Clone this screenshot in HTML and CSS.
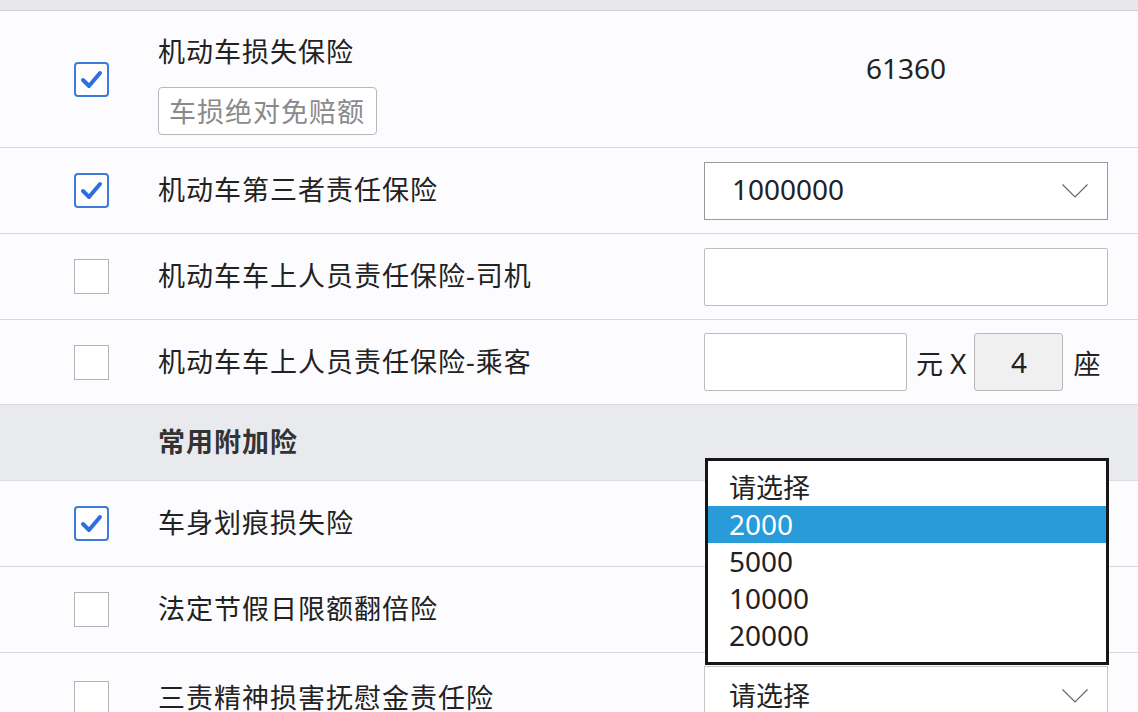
FILE: index.html
```html
<!DOCTYPE html>
<html>
<head>
    <title>投保方案</title>
    <link rel="stylesheet" href="styles.css">
</head>
<body>
    <div class="sheet">
        <div class="topbar"></div>

        <div class="row row-tall">
            <div class="check-cell"><span class="check checked"></span></div>
            <div class="label-cell stack">
                <span class="label">机动车损失保险</span>
                <input class="field small" type="text" placeholder="车损绝对免赔额">
            </div>
            <div class="value-cell center num">61360</div>
        </div>

        <div class="row">
            <div class="check-cell"><span class="check checked"></span></div>
            <div class="label-cell"><span class="label">机动车第三者责任保险</span></div>
            <div class="value-cell">
                <div class="select">
                    <span class="num">1000000</span>
                    <svg class="chevron" width="26" height="14" viewBox="0 0 26 14"><polyline points="0.5,0.5 13,13 25.5,0.5" fill="none" stroke="#666" stroke-width="1.2"/></svg>
                </div>
            </div>
        </div>

        <div class="row">
            <div class="check-cell"><span class="check"></span></div>
            <div class="label-cell"><span class="label">机动车车上人员责任保险-司机</span></div>
            <div class="value-cell"><input class="field full" type="text"></div>
        </div>

        <div class="row row-short">
            <div class="check-cell"><span class="check"></span></div>
            <div class="label-cell"><span class="label">机动车车上人员责任保险-乘客</span></div>
            <div class="value-cell seats">
                <input class="field amount" type="text">
                <span class="unit">元 <span class="num">X</span></span>
                <span class="seat-box num">4</span>
                <span class="unit">座</span>
            </div>
        </div>

        <div class="row section">
            <div class="check-cell"></div>
            <div class="label-cell"><span class="label bold">常用附加险</span></div>
            <div class="value-cell"></div>
        </div>

        <div class="row">
            <div class="check-cell"><span class="check checked"></span></div>
            <div class="label-cell"><span class="label">车身划痕损失险</span></div>
            <div class="value-cell"></div>
        </div>

        <div class="row">
            <div class="check-cell"><span class="check"></span></div>
            <div class="label-cell"><span class="label">法定节假日限额翻倍险</span></div>
            <div class="value-cell"></div>
        </div>

        <div class="row row-last">
            <div class="check-cell"><span class="check"></span></div>
            <div class="label-cell"><span class="label">三责精神损害抚慰金责任险</span></div>
            <div class="value-cell">
                <div class="select low">
                    <span>请选择</span>
                    <svg class="chevron" width="26" height="14" viewBox="0 0 26 14"><polyline points="0.5,0.5 13,13 25.5,0.5" fill="none" stroke="#666" stroke-width="1.2"/></svg>
                </div>
            </div>
        </div>

        <!-- open option list of the scratch cover select -->
        <ul class="options">
            <li>请选择</li>
            <li class="active num">2000</li>
            <li class="num">5000</li>
            <li class="num">10000</li>
            <li class="num">20000</li>
        </ul>
    </div>
</body>
</html>
```

FILE: styles.css
```css
body {
    margin: 0;
    background: #fcfcfe;
    font-family: "Noto Sans", "Noto Sans CJK SC", sans-serif;
    color: #222;
}
.sheet {
    position: relative;
    width: 1138px;
    height: 712px;
    overflow: hidden;
}
.topbar {
    height: 10px;
    background: #e7e8eb;
    border-bottom: 1px solid #cfd0d3;
}
.row {
    display: grid;
    grid-template-columns: 158px 1fr 404px;
    padding-right: 30px;
    height: 85px;
    border-bottom: 1px solid #d9d9dc;
    background: #fcfcfe;
}
.row-tall {
    height: 136px;
}
.row-short {
    height: 84px;
}
.row-last {
    height: 90px;
    border-bottom: none;
}
.section {
    height: 75px;
    background: #e9eaed;
    border-bottom-color: #dcdde0;
}
.check-cell {
    display: flex;
    align-items: center;
    padding-left: 74px;
}
.check {
    width: 33px;
    height: 33px;
    border: 1px solid #b3b3b6;
    background: #fff;
    box-sizing: content-box;
}
.check.checked {
    width: 31px;
    height: 31px;
    border: 2px solid #3d7ad9;
    border-radius: 4px;
    background: #fff url("data:image/svg+xml;utf8,<svg xmlns='http://www.w3.org/2000/svg' width='31' height='31' viewBox='0 0 31 31'><polyline points='7,16 13,22 24,9' fill='none' stroke='%232d6fe0' stroke-width='4' stroke-linecap='round' stroke-linejoin='round'/></svg>") no-repeat center;
}
.label-cell {
    display: flex;
    align-items: center;
}
.label {
    font-size: 27px;
    line-height: 36px;
    letter-spacing: 1px;
    margin-top: -1px;
}
.bold {
    font-weight: bold;
    color: #333;
}
.stack {
    flex-direction: column;
    align-items: flex-start;
    justify-content: flex-start;
    padding-top: 24px;
    gap: 17px;
}
.value-cell {
    display: flex;
    align-items: center;
}
.value-cell.center {
    justify-content: center;
    padding-bottom: 22px;
}
.num {
    font-size: 28px;
}
.field {
    height: 58px;
    border: 1px solid #bdbdc0;
    border-radius: 2px;
    background: #fff;
    box-sizing: border-box;
    font-family: inherit;
    font-size: 27px;
    padding: 0 10px;
}
.field.small {
    width: 219px;
    height: 48px;
    border-radius: 4px;
    border-color: #b8b8bb;
}
.field::placeholder {
    color: #8a8a8a;
    letter-spacing: 1px;
}
.field.full {
    width: 404px;
}
.field.amount {
    width: 203px;
}
.unit {
    font-size: 27px;
    margin-left: 9px;
}
.seat-box {
    width: 89px;
    height: 58px;
    margin-left: 8px;
    border: 1px solid #b8b8bb;
    border-radius: 3px;
    background: #f0f0f1;
    box-sizing: border-box;
    display: flex;
    align-items: center;
    justify-content: center;
}
.seats .seat-box + .unit {
    margin-left: 10px;
}
.select {
    width: 404px;
    height: 58px;
    border: 1px solid #9a9a9d;
    background: #fff;
    box-sizing: border-box;
    display: flex;
    align-items: center;
    justify-content: space-between;
    padding: 0 19px 4px 27px;
    font-size: 27px;
}
.select .chevron {
    margin-top: 4px;
}
.select.low {
    align-self: flex-start;
    margin-top: 13px;
    height: 70px;
    border-color: #c6c6c9;
    padding-left: 24px;
    padding-bottom: 14px;
}
.options {
    position: absolute;
    left: 705px;
    top: 458px;
    width: 404px;
    margin: 0;
    padding: 8px 0 8px;
    list-style: none;
    border: 3px solid #161616;
    background: #fff;
    box-sizing: border-box;
}
.options li {
    height: 37px;
    line-height: 37px;
    padding-left: 21px;
    font-size: 27px;
}
.options li.num {
    font-size: 28px;
}
.options li.active {
    background: #2a9bd9;
    color: #fff;
}
```
